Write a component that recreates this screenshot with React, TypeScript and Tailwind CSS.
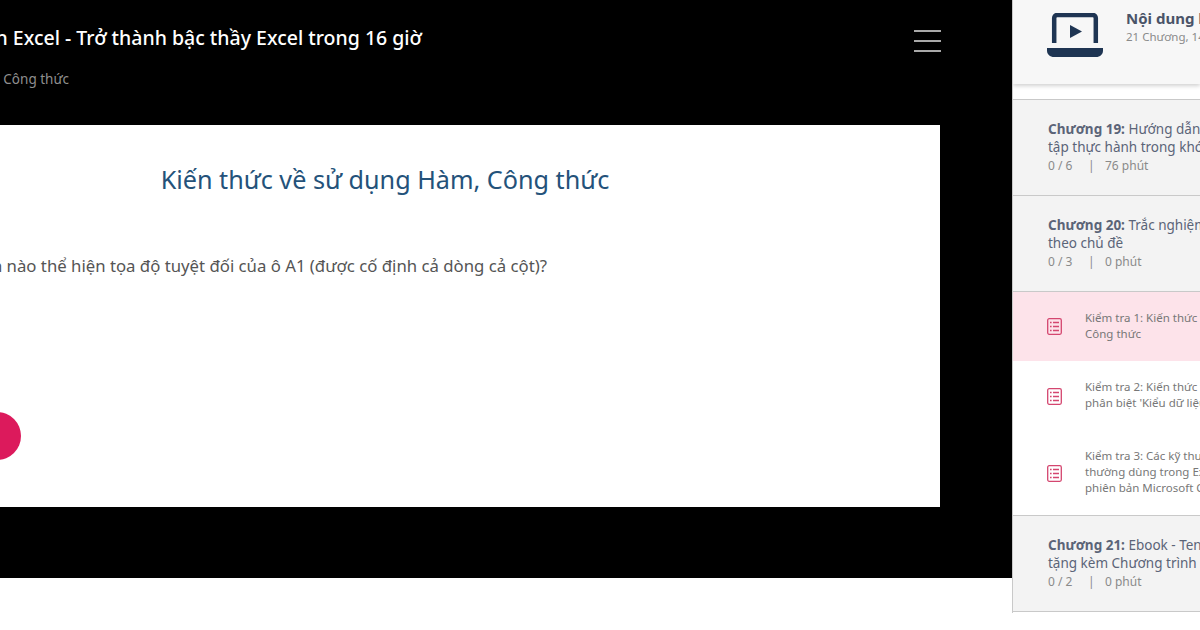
import React from 'react';

const font = "font-['Noto_Sans',sans-serif]";

const TestIcon = () => (
  <svg width="15" height="17" viewBox="0 0 15 17" fill="none" className="shrink-0">
    <rect x="0.7" y="0.7" width="13.6" height="15.6" rx="1.5" stroke="#d4466f" strokeWidth="1.3" />
    <path d="M6 4.5h6M6 8.5h6M6 12.5h6M3 4.5h1.6M3 8.5h1.6M3 12.5h1.6" stroke="#d4466f" strokeWidth="1.3" />
  </svg>
);

type ChapterProps = { name: string; lines: string[]; done: string; time: string };

const Chapter = ({ name, lines, done, time }: ChapterProps) => (
  <div className="h-[96px] border-b border-[#c9c9c9] bg-[#f3f3f3] pl-[35px] pt-[20px] whitespace-nowrap">
    <div className="text-[13.5px] leading-[18px] text-[#5b6478]">
      <span className="font-bold">{name}</span> {lines[0]}
    </div>
    <div className="text-[13.5px] leading-[18px] text-[#5b6478]">{lines[1]}</div>
    <div className="mt-[2px] flex text-[12px] leading-[16px] text-[#8a8a8a]">
      <span className="w-[40px]">{done}</span>
      <span className="w-[17px]">|</span>
      <span>{time}</span>
    </div>
  </div>
);

type LessonProps = { lines: string[]; active?: boolean; height: string };

const Lesson = ({ lines, active, height }: LessonProps) => (
  <div className={`flex items-center gap-[23px] pl-[34px] whitespace-nowrap ${height} ${active ? 'bg-[#fde3ea]' : 'bg-white'}`}>
    <TestIcon />
    <div className="mt-[-2px] text-[11.5px] leading-[16px] text-[#777]">
      {lines.map((l) => <div key={l}>{l}</div>)}
    </div>
  </div>
);

export default function App() {
  return (
    <div className={`flex h-[630px] w-[1200px] overflow-hidden bg-white ${font}`}>
      {/* Player */}
      <div className="ml-[-300px] h-[578px] w-[1312px] shrink-0 bg-black">
        <div className="flex h-[125px] justify-between pr-[71px]">
          <div className="whitespace-nowrap pt-[24px]">
            <div className="w-[722px] text-right text-[19.5px] leading-[28px] font-medium text-white">Tuyệt đỉnh Excel - Trở thành bậc thầy Excel trong 16 giờ</div>
            <div className="mt-[17px] w-[369px] text-right text-[13.5px] leading-[20px] text-[#8f8f8f]">Kiểm tra 1: Kiến thức về sử dụng Hàm, Công thức</div>
          </div>
          <div className="mt-[30px] flex h-[22px] w-[27px] flex-col justify-between">
            <div className="h-[2px] bg-[#a8a8a8]" />
            <div className="h-[2px] bg-[#a8a8a8]" />
            <div className="h-[2px] bg-[#a8a8a8]" />
          </div>
        </div>
        <div className="ml-[130px] h-[382px] w-[1110px] bg-white">
          <div className="pt-[36px] text-center text-[25.2px] leading-[36px] text-[#24527a]">Kiến thức về sử dụng Hàm, Công thức</div>
          <div className="mt-[56px] w-[717px] whitespace-nowrap text-right text-[16.75px] leading-[26px] text-[#555]">Cách nào thể hiện tọa độ tuyệt đối của ô A1 (được cố định cả dòng cả cột)?</div>
          <div className="ml-[143px] mt-[133px] h-[48px] w-[48px] rounded-full bg-[#dc1a5c]" />
        </div>
      </div>

      {/* Course content */}
      <div className="h-[613px] w-[188px] shrink-0 overflow-hidden border-l border-[#c9c9c9] bg-white">
        <div className="flex h-[84px] gap-[23px] bg-[#f7f7f7] pl-[34px] pt-[13px] shadow-[0_2px_4px_rgba(0,0,0,0.18)] whitespace-nowrap">
          <svg width="56" height="45" viewBox="0 0 56 45" className="shrink-0">
            <path d="M7.2 30V5A3 3 0 0 1 10.2 2h35.6a3 3 0 0 1 3 3V30" fill="none" stroke="#1f3553" strokeWidth="4.5" />
            <path d="M0 35h56v2.5c0 4-3 6.5-7 6.5H7c-4 0-7-2.5-7-6.5z" fill="#1f3553" />
            <path d="M23 12l12 6.5L23 25z" fill="#1f3553" />
          </svg>
          <div className="mt-[-5px]">
            <div className="text-[15px] leading-[20px] font-bold text-[#4a5468]">Nội dung khóa học</div>
            <div className="mt-[1px] text-[11.5px] leading-[16px] text-[#8a8a8a]">21 Chương, 146 bài học</div>
          </div>
        </div>
        <div className="mt-[15px] border-t border-[#c9c9c9]">
          <Chapter name="Chương 19:" lines={['Hướng dẫn sử dụng', 'tập thực hành trong khóa học']} done="0 / 6" time="76 phút" />
          <Chapter name="Chương 20:" lines={['Trắc nghiệm kiến thức', 'theo chủ đề']} done="0 / 3" time="0 phút" />
          <Lesson active height="h-[69px]" lines={['Kiểm tra 1: Kiến thức về sử dụng Hàm,', 'Công thức']} />
          <Lesson height="h-[70px]" lines={['Kiểm tra 2: Kiến thức về', "phân biệt 'Kiểu dữ liệu'"]} />
          <Lesson height="h-[84px]" lines={['Kiểm tra 3: Các kỹ thuật', 'thường dùng trong Excel', 'phiên bản Microsoft Office']} />
          <div className="border-t border-[#c9c9c9]">
            <Chapter name="Chương 21:" lines={['Ebook - Tendo', 'tặng kèm Chương trình học']} done="0 / 2" time="0 phút" />
          </div>
        </div>
      </div>
    </div>
  );
}
